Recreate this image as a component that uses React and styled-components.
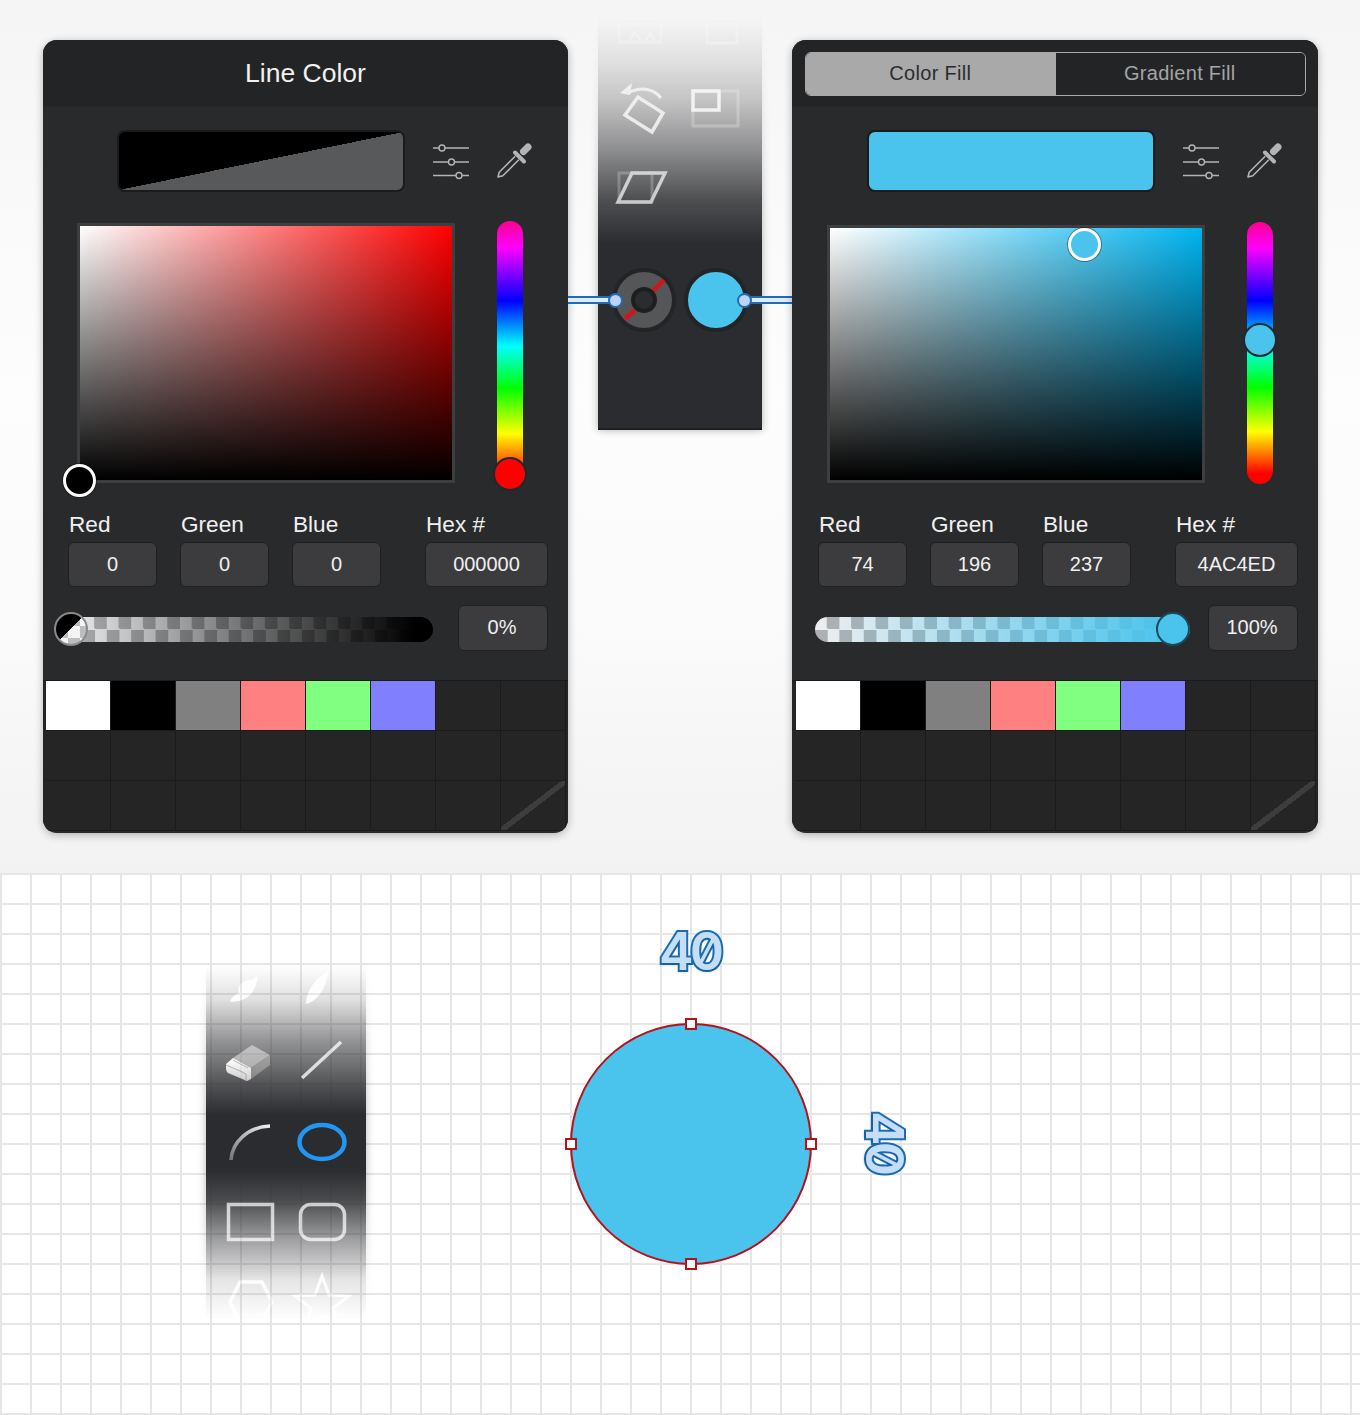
import React from 'react';
import styled, { createGlobalStyle } from 'styled-components';

const ACCENT = '#4AC4ED';
const SWATCHES = ['#ffffff', '#000000', '#808080', '#ff8080', '#80ff80', '#8080ff'];

const GlobalStyle = createGlobalStyle`
  html, body { margin: 0; padding: 0; }
  body { font-family: "Liberation Sans", Arial, sans-serif; background: #fff; }
`;

const Page = styled.div`
  width: 1360px;
  height: 1415px;
  overflow: hidden;
`;

const Stage = styled.section`
  height: 873px;
  box-sizing: border-box;
  padding: 40px 42px 0 43px;
  display: flex;
  align-items: flex-start;
  background: linear-gradient(to bottom, #f5f5f5 0, #fdfdfd 45%, #fbfbfb 70%, #f2f2f2 100%);
`;

const Panel = styled.div`
  width: ${p => p.$width}px;
  height: 793px;
  flex: none;
  border-radius: 14px;
  overflow: hidden;
  position: relative;
  background: #292a2c;
  box-shadow: 0 2px 8px rgba(0, 0, 0, 0.28);
`;

const PanelHeader = styled.header`
  height: 67px;
  box-sizing: border-box;
  background: #232426;
  display: flex;
  align-items: center;
  justify-content: center;
  border-bottom: 1px solid #27282a;
`;

const Title = styled.h2`
  margin: 0;
  font-size: 26.5px;
  font-weight: 400;
  color: #f1f1f1;
`;

const Tabs = styled.div`
  width: 501px;
  height: 44px;
  margin-left: 1px;
  margin-top: 1px;
  box-sizing: border-box;
  display: flex;
  border: 1.5px solid #a9a9a9;
  border-radius: 6px;
  overflow: hidden;
`;

const Tab = styled.div`
  width: 50%;
  display: flex;
  align-items: center;
  justify-content: center;
  padding-right: 1px;
  font-size: 20px;
  letter-spacing: 0.3px;
  color: ${p => (p.$active ? '#2b2c2e' : '#a5a5a5')};
  background: ${p => (p.$active ? '#a9a9a9' : '#232426')};
`;

const PanelBody = styled.div`
  padding: 24px 0 0 ${p => p.$inset}px;
`;

const PreviewRow = styled.div`
  display: flex;
  align-items: center;
  height: 60px;
  margin-left: 49px;
`;

const Preview = styled.div`
  width: 288px;
  height: 62px;
  flex: none;
  box-sizing: border-box;
  border: 2px solid #1a1b1d;
  border-radius: 8px;
  background: ${p => p.$fill};
`;

const Tools = styled.div`
  display: flex;
  align-items: center;
  margin-left: 28px;
  gap: 24px;
`;

const PickerRow = styled.div`
  display: flex;
  align-items: flex-start;
  height: 266px;
  margin-top: 30px;
  margin-left: 9px;
`;

const ColorField = styled.div`
  width: 378px;
  height: ${p => p.$height}px;
  margin-top: ${p => p.$top}px;
  box-sizing: border-box;
  position: relative;
  border: 3px solid #3d3e40;
  background:
    linear-gradient(to top, #000, rgba(0, 0, 0, 0)),
    linear-gradient(to right, #fff, ${p => p.$hue});
`;

const FieldKnob = styled.span`
  position: absolute;
  left: ${p => p.$x}px;
  top: ${p => p.$y}px;
  width: 33px;
  height: 33px;
  box-sizing: border-box;
  border-radius: 50%;
  border: 3px solid #fff;
  background: ${p => p.$color};
  box-shadow: 0 0 0 1px rgba(0, 0, 0, 0.35);
`;

const HueBar = styled.div`
  width: 26px;
  height: ${p => p.$height}px;
  margin-top: ${p => p.$top}px;
  margin-left: 42px;
  position: relative;
  border-radius: 13px;
  background: linear-gradient(to bottom, #ff0090 0, #ff00ff 10%, #0000ff 30%, #00ffff 47%, #00ff00 63%, #ffff00 80%, #ff0000 96%);
`;

const HueKnob = styled.span`
  position: absolute;
  left: -4px;
  top: ${p => p.$y}px;
  width: 34px;
  height: 34px;
  box-sizing: border-box;
  border-radius: 50%;
  border: 2px solid #1c2a30;
  background: ${p => p.$color};
`;

const FieldsRow = styled.div`
  display: grid;
  grid-template-columns: 112px 112px 133px 123px;
  margin-top: 26px;
`;

const FieldLabel = styled.label`
  display: block;
  height: 24px;
  line-height: 24px;
  padding-left: 1px;
  margin-bottom: 5px;
  font-size: 22.6px;
  color: #f0f0f0;
`;

const ValueBox = styled.div`
  height: 45px;
  width: ${p => p.$width}px;
  box-sizing: border-box;
  padding-bottom: 1px;
  display: flex;
  align-items: center;
  justify-content: center;
  font-size: 20px;
  color: #f0f0f0;
  background: #3c3c3e;
  border: 1px solid #1e1f21;
  border-radius: 6px;
`;

const OpacityRow = styled.div`
  display: flex;
  align-items: center;
  justify-content: space-between;
  width: 480px;
  margin-top: 18px;
`;

const OpacityBox = styled(ValueBox)`
  height: 46px;
  padding: 0 2px 1px 0;
`;

const OpacityTrack = styled.div`
  width: 375px;
  height: 25px;
  margin-left: ${p => p.$shift}px;
  margin-top: 2px;
  position: relative;
  border-radius: 13px;
  background:
    linear-gradient(to right, ${p => p.$from} 2%, ${p => p.$to} 95%),
    repeating-conic-gradient(#aeb0b2 0 25%, #eceeef 0 50%) 0 0 / 24.4px 25px;
`;

const OpacityThumb = styled.span`
  position: absolute;
  top: -5px;
  left: ${p => p.$x}px;
  width: 34px;
  height: 34px;
  box-sizing: border-box;
  border-radius: 50%;
  border: 2px solid ${p => p.$ring};
  background: ${p => p.$fill};
`;

const SwatchGrid = styled.div`
  display: grid;
  grid-template-columns: repeat(8, 65px);
  grid-auto-rows: 50px;
  margin-top: 29px;
  padding-left: ${p => p.$inset}px;
  background: #252526;
  border-top: 1px solid #1b1b1c;
`;

const SwatchCell = styled.div`
  box-sizing: border-box;
  border-right: 1px solid #1b1b1c;
  border-bottom: 1px solid #1b1b1c;
  background: ${p => p.$color || '#252526'};
`;

const CornerCell = styled(SwatchCell)`
  background: linear-gradient(to bottom right, transparent 47%, #3d3d3e 47%, #3d3d3e 54%, transparent 54%);
`;

const ToolColumn = styled.div`
  width: 164px;
  flex: none;
  margin: -22px 30px 0;
  position: relative;
`;

const Fade = styled.div`
  margin: 0 -20px;
  padding: 0 20px 24px;
  -webkit-mask-image: ${p => p.$mask};
  mask-image: ${p => p.$mask};
`;

const Strip = styled.div`
  background: #2b2c2f;
  overflow: hidden;
  box-shadow: 0 0 8px rgba(0, 0, 0, 0.3);
`;

const TopStrip = styled(Strip)`
  height: 412px;
  border-bottom: 2px solid #1d1e20;
  box-sizing: border-box;
`;

const ToolGrid = styled.div`
  display: grid;
  grid-template-columns: 72px 72px;
  grid-auto-rows: 80px;
  padding-left: ${p => p.$inset}px;
  margin-top: ${p => p.$offset}px;
`;

const ToolCell = styled.div`
  display: flex;
  align-items: center;
  justify-content: center;
`;

const ControlRow = styled.div`
  display: flex;
  justify-content: flex-start;
  margin-top: 40px;
  padding-left: 14px;
  gap: 8px;
`;

const FillControl = styled.div`
  width: 64px;
  height: 64px;
  box-sizing: border-box;
  border-radius: 50%;
  border: 4px solid #232426;
  background: ${ACCENT};
`;

const Connector = styled.span`
  position: absolute;
  left: ${p => p.$left}px;
  width: ${p => p.$width}px;
  top: 278px;
  height: 8px;
  box-sizing: border-box;
  border-top: 2px solid #1f6db5;
  border-bottom: 2px solid #1f6db5;
  background: #dfecfb;
`;

const Handle = styled.span`
  position: absolute;
  left: ${p => p.$left}px;
  top: 274.5px;
  width: 15px;
  height: 15px;
  box-sizing: border-box;
  border-radius: 50%;
  border: 2px solid #1f6db5;
  background: #bcd3f5;
`;

const Canvas = styled.section`
  height: 542px;
  position: relative;
  background-color: #fff;
  background-image:
    linear-gradient(to right, #e6e6e6 2px, transparent 2px),
    linear-gradient(to bottom, #e6e6e6 2px, transparent 2px);
  background-size: 30px 30px;
`;

const CanvasTools = styled(Fade)`
  position: absolute;
  left: 206px;
  top: 92px;
  padding-bottom: 0;
`;

const CanvasStrip = styled(Strip)`
  width: 160px;
  height: 355px;
`;

const Circle = styled.div`
  position: absolute;
  left: 570px;
  top: 150px;
  width: 242px;
  height: 242px;
  box-sizing: border-box;
  border-radius: 50%;
  border: 2px solid #b5121b;
  background: ${ACCENT};
`;

const ResizeDot = styled.span`
  position: absolute;
  left: ${p => p.$x}px;
  top: ${p => p.$y}px;
  width: 12px;
  height: 12px;
  box-sizing: border-box;
  background: #fff;
  border: 2px solid #b5121b;
`;

const Dimension = styled.span`
  position: absolute;
  left: ${p => p.$x}px;
  top: ${p => p.$y}px;
  font-family: Inter, "Liberation Sans", sans-serif;
  font-feature-settings: "zero" 1;
  font-size: 52px;
  line-height: 52px;
  font-weight: 600;
  letter-spacing: -4px;
  color: #c4def8;
  -webkit-text-stroke: 4px #1a6cb3;
  paint-order: stroke fill;
  text-shadow: 0 3px 2px rgba(0, 0, 0, 0.1);
  writing-mode: ${p => (p.$vertical ? 'vertical-rl' : 'horizontal-tb')};
`;

const ToolIcon = ({ children }) => (
  <svg width="60" height="60" viewBox="0 0 60 60" fill="none">{children}</svg>
);

const SlidersIcon = () => (
  <svg width="38" height="38" viewBox="0 0 38 38" fill="none" stroke="#b4b4b4" strokeWidth="1.4">
    <path d="M0 6h6m6 0h24M0 20h15.500m6 0h14.500M0 33.500h23m6 0h7" />
    <circle cx="9" cy="6" r="3" />
    <circle cx="18.500" cy="20" r="3" />
    <circle cx="26" cy="33.500" r="3" />
  </svg>
);

const DropperIcon = () => (
  <svg width="38" height="38" viewBox="0 0 38 38" fill="none" stroke="#b4b4b4">
    <path d="M33 5l-4.500 4.500" strokeWidth="7" strokeLinecap="round" />
    <path d="M20 10.500l9 9" strokeWidth="4" strokeLinecap="round" />
    <path d="M20.200 14.200L4.200 30.200 3 35l4.800-1.200 16-16" strokeWidth="1.600" strokeLinejoin="round" />
  </svg>
);

const LineControl = () => (
  <svg width="64" height="64" viewBox="0 0 64 64">
    <circle cx="32" cy="32" r="30" fill="#555658" stroke="#232426" strokeWidth="4" />
    <path d="M41 23l11-11M13 51l10-9" stroke="#d4141a" strokeWidth="4.500" />
    <circle cx="32" cy="32" r="11" fill="#2b2c2f" stroke="#1d1e20" strokeWidth="4" />
  </svg>
);

const TopTools = () => (
  <ToolGrid $inset={10} $offset={-30}>
    <ToolCell>
      <ToolIcon>
        <g opacity="0.5">
          <path d="M5 26h42v18H5zM14 44l7-10 7 10M30 44l6-8 6 8" stroke="#eee" strokeWidth="3" />
        </g>
      </ToolIcon>
    </ToolCell>
    <ToolCell>
      <ToolIcon>
        <path d="M21 26h30v19H21z" stroke="#eee" strokeOpacity="0.5" strokeWidth="3" />
      </ToolIcon>
    </ToolCell>
    <ToolCell>
      <ToolIcon>
        <path d="M24 19L11 37l27 17 11-19z" stroke="#d6d6d6" strokeWidth="3.500" />
        <path d="M14 15C28 8 40 11 47 20" stroke="#d6d6d6" strokeWidth="3" />
        <path d="M6 15L18 5l-2 12z" fill="#d6d6d6" />
      </ToolIcon>
    </ToolCell>
    <ToolCell>
      <ToolIcon>
        <rect x="7" y="13" width="45" height="35" stroke="#ddd" strokeOpacity="0.3" strokeWidth="3" />
        <rect x="7" y="13" width="26" height="19" stroke="#e6e6e6" strokeWidth="3.500" />
      </ToolIcon>
    </ToolCell>
    <ToolCell>
      <ToolIcon>
        <rect x="5" y="15" width="33" height="29" stroke="#bbb" strokeOpacity="0.35" strokeWidth="3" />
        <path d="M18 15h33L37 44H4z" stroke="#c0c0c0" strokeWidth="3.500" />
      </ToolIcon>
    </ToolCell>
    <ToolCell />
  </ToolGrid>
);

const CanvasToolIcons = () => (
  <ToolGrid $inset={8} $offset={-23}>
    <ToolCell>
      <ToolIcon>
        <path d="M10 50c2-6 6-8 9-9-3-6 4-14 12-13l7-4c-2 14-8 26-28 26z" fill="#eee" />
      </ToolIcon>
    </ToolCell>
    <ToolCell>
      <ToolIcon>
        <path d="M14 52c0-14 10-26 23-34-3 16-9 30-23 34z" fill="#eee" />
      </ToolIcon>
    </ToolCell>
    <ToolCell>
      <ToolIcon>
        <defs>
          <linearGradient id="eraserEnd" x1="0" y1="0" x2="0" y2="1">
            <stop offset="0" stopColor="#ffffff" />
            <stop offset="1" stopColor="#bdbdbd" />
          </linearGradient>
        </defs>
        <path d="M13 26L32 13l18 10-19 13z" fill="#8e8e8e" />
        <path d="M31 36l19-13v10L31 47z" fill="#666" />
        <path d="M6 32l7-6 18 10v11l-4 2-19-8q-2-2-2-4z" fill="url(#eraserEnd)" />
        <path d="M6 33l14 6 6 3v7M13 28l15 8" stroke="#8d8d8d" strokeWidth="1" />
      </ToolIcon>
    </ToolCell>
    <ToolCell>
      <ToolIcon>
        <path d="M10 46L49 10" stroke="#cfcfcf" strokeWidth="3.500" />
      </ToolIcon>
    </ToolCell>
    <ToolCell>
      <ToolIcon>
        <defs>
          <linearGradient id="arcStroke" x1="0" y1="1" x2="1" y2="0">
            <stop offset="0" stopColor="#777" />
            <stop offset="1" stopColor="#f0f0f0" />
          </linearGradient>
        </defs>
        <path d="M11 48C12 30 28 15 50 14" stroke="url(#arcStroke)" strokeWidth="3.500" />
      </ToolIcon>
    </ToolCell>
    <ToolCell>
      <ToolIcon>
        <ellipse cx="30" cy="30" rx="22.500" ry="17" stroke="#2196f3" strokeWidth="4.500" />
      </ToolIcon>
    </ToolCell>
    <ToolCell>
      <ToolIcon>
        <rect x="8.500" y="12.500" width="44" height="35" stroke="#c6c6c6" strokeWidth="3.500" />
      </ToolIcon>
    </ToolCell>
    <ToolCell>
      <ToolIcon>
        <rect x="8.500" y="12.500" width="44" height="35" rx="10" stroke="#c6c6c6" strokeWidth="3.500" />
      </ToolIcon>
    </ToolCell>
    <ToolCell>
      <ToolIcon>
        <path d="M20 10h22l10 20-10 20H20L10 30z" stroke="#eee" strokeWidth="3.500" />
      </ToolIcon>
    </ToolCell>
    <ToolCell>
      <ToolIcon>
        <path d="M30 4l7 19 20 1-16 12 6 20-17-12-17 12 6-20L3 24l20-1z" stroke="#eee" strokeWidth="3" />
      </ToolIcon>
    </ToolCell>
  </ToolGrid>
);

const ColorPanel = ({ width, inset, gridInset, header, preview, field, hue, fieldKnob, hueKnob, values, opacity, track, thumb }) => {
  const cells = Array.from({ length: 23 }, (_, i) => SWATCHES[i]);
  return (
    <Panel $width={width}>
      <PanelHeader>{header}</PanelHeader>
      <PanelBody $inset={inset}>
        <PreviewRow>
          <Preview $fill={preview} />
          <Tools>
            <SlidersIcon />
            <DropperIcon />
          </Tools>
        </PreviewRow>
        <PickerRow>
          <ColorField {...field}>
            <FieldKnob {...fieldKnob} />
          </ColorField>
          <HueBar {...hue}>
            <HueKnob {...hueKnob} />
          </HueBar>
        </PickerRow>
        <FieldsRow>
          {['Red', 'Green', 'Blue', 'Hex #'].map((name, i) => (
            <div key={name}>
              <FieldLabel>{name}</FieldLabel>
              <ValueBox $width={i === 3 ? 123 : 89}>{values[i]}</ValueBox>
            </div>
          ))}
        </FieldsRow>
        <OpacityRow>
          <OpacityTrack {...track}>
            <OpacityThumb {...thumb} />
          </OpacityTrack>
          <OpacityBox $width={90}>{opacity}</OpacityBox>
        </OpacityRow>
      </PanelBody>
      <SwatchGrid $inset={gridInset}>
        {cells.map((color, i) => <SwatchCell key={i} $color={color} />)}
        <CornerCell />
      </SwatchGrid>
    </Panel>
  );
};

const TOP_MASK = 'linear-gradient(to bottom, rgba(0,0,0,0) 0, rgba(0,0,0,.1) 42px, rgba(0,0,0,.25) 82px, rgba(0,0,0,.52) 132px, rgba(0,0,0,.83) 182px, #000 225px)';
const CANVAS_MASK = 'linear-gradient(to bottom, rgba(0,0,0,0) 0, rgba(0,0,0,.15) 35px, rgba(0,0,0,.5) 75px, rgba(0,0,0,.85) 125px, #000 150px, #000 205px, rgba(0,0,0,.85) 235px, rgba(0,0,0,.45) 275px, rgba(0,0,0,.12) 315px, rgba(0,0,0,0) 355px)';

export default function App() {
  return (
    <Page>
      <GlobalStyle />
      <Stage>
        <ColorPanel
          width={525}
          inset={25}
          gridInset={3}
          header={<Title>Line Color</Title>}
          preview="linear-gradient(to bottom right, #000 50%, #58595b 50%)"
          field={{ $top: 2, $height: 260, $hue: '#ff0000' }}
          hue={{ $top: 0, $height: 266 }}
          fieldKnob={{ $x: -17, $y: 238, $color: '#000' }}
          hueKnob={{ $y: 236, $color: '#ff0000' }}
          values={['0', '0', '0', '000000']}
          opacity="0%"
          track={{ $shift: -10, $from: 'rgba(0,0,0,0)', $to: '#000' }}
          thumb={{ $x: -4, $ring: '#8a8a8a', $fill: 'linear-gradient(135deg, #000 50%, rgba(0,0,0,0) 50%), repeating-conic-gradient(#bdbdbd 0 25%, #f4f4f4 0 50%) 0 0 / 24px 24px' }}
        />
        <ToolColumn>
          <Fade $mask={TOP_MASK}>
            <TopStrip>
              <TopTools />
              <ControlRow>
                <LineControl />
                <FillControl />
              </ControlRow>
            </TopStrip>
          </Fade>
          <Connector $left={-30} $width={47} />
          <Connector $left={146} $width={48} />
          <Handle $left={10} />
          <Handle $left={139} />
        </ToolColumn>
        <ColorPanel
          width={526}
          inset={26}
          gridInset={4}
          header={
            <Tabs>
              <Tab $active>Color Fill</Tab>
              <Tab>Gradient Fill</Tab>
            </Tabs>
          }
          preview={ACCENT}
          field={{ $top: 4, $height: 258, $hue: '#00b4f0' }}
          hue={{ $top: 1, $height: 262 }}
          fieldKnob={{ $x: 238, $y: 0, $color: ACCENT }}
          hueKnob={{ $y: 101, $color: ACCENT }}
          values={['74', '196', '237', '4AC4ED']}
          opacity="100%"
          track={{ $shift: -3, $from: 'rgba(74,196,237,0)', $to: ACCENT }}
          thumb={{ $x: 341, $ring: '#1c4a5c', $fill: ACCENT }}
        />
      </Stage>
      <Canvas>
        <CanvasTools $mask={CANVAS_MASK}>
          <CanvasStrip>
            <CanvasToolIcons />
          </CanvasStrip>
        </CanvasTools>
        <Dimension $x={659} $y={53}>40</Dimension>
        <Circle />
        <ResizeDot $x={685} $y={145} />
        <ResizeDot $x={685} $y={385} />
        <ResizeDot $x={565} $y={265} />
        <ResizeDot $x={805} $y={265} />
        <Dimension $x={858} $y={238} $vertical>40</Dimension>
      </Canvas>
    </Page>
  );
}
